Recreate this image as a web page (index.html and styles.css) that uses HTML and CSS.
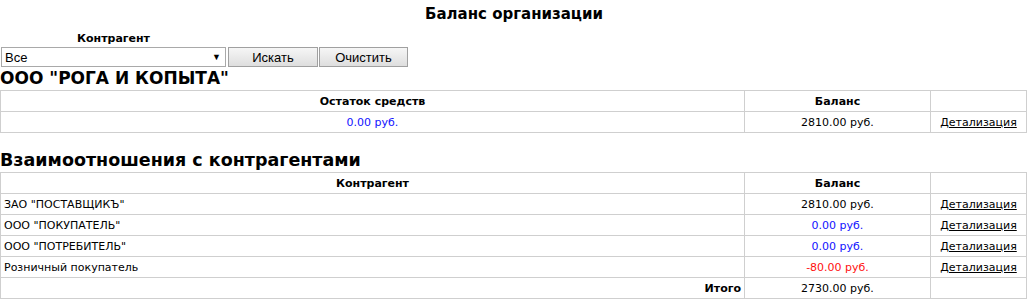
FILE: index.html
```html
<!DOCTYPE html>
<html lang="ru">
<head>
<meta charset="utf-8">
<title>Баланс организации</title>
<link rel="stylesheet" href="styles.css">
</head>
<body>
<h1 class="page-title">Баланс организации</h1>
<form class="filter">
  <div class="filter-field">
    <label class="filter-label" for="ka">Контрагент</label>
    <div class="select">
      <span class="select-value">Все</span>
      <span class="select-arrow">▼</span>
    </div>
  </div>
  <button type="button" class="btn btn-search">Искать</button>
  <button type="button" class="btn btn-clear">Очистить</button>
</form>

<h2 class="section-title first">ООО "РОГА И КОПЫТА"</h2>
<table class="grid">
  <colgroup><col class="c1"><col class="c2"><col class="c3"></colgroup>
  <tr><th>Остаток средств</th><th>Баланс</th><th></th></tr>
  <tr><td class="center pos">0.00 руб.</td><td class="center">2810.00 руб.</td><td class="center"><a href="#">Детализация</a></td></tr>
</table>

<h2 class="section-title second">Взаимоотношения с контрагентами</h2>
<table class="grid">
  <colgroup><col class="c1"><col class="c2"><col class="c3"></colgroup>
  <tr><th>Контрагент</th><th>Баланс</th><th></th></tr>
  <tr><td>ЗАО "ПОСТАВЩИКЪ"</td><td class="center">2810.00 руб.</td><td class="center"><a href="#">Детализация</a></td></tr>
  <tr><td>ООО "ПОКУПАТЕЛЬ"</td><td class="center pos">0.00 руб.</td><td class="center"><a href="#">Детализация</a></td></tr>
  <tr><td>ООО "ПОТРЕБИТЕЛЬ"</td><td class="center pos">0.00 руб.</td><td class="center"><a href="#">Детализация</a></td></tr>
  <tr><td>Розничный покупатель</td><td class="center neg">-80.00 руб.</td><td class="center"><a href="#">Детализация</a></td></tr>
  <tr><td class="total">Итого</td><td class="center">2730.00 руб.</td><td></td></tr>
</table>
</body>
</html>
```
FILE: styles.css
```css
html, body {
  margin: 0;
  padding: 0;
  background: #fff;
  color: #000;
  font-family: "DejaVu Sans", Verdana, sans-serif;
  font-size: 11px;
}
.page-title {
  margin: 0;
  padding-top: 5px;
  height: 25px;
  text-align: center;
  font-size: 15px;
  font-weight: bold;
}
.filter {
  display: flex;
  align-items: flex-end;
  padding-left: 1px;
  height: 37px;
}
.filter-field {
  display: flex;
  flex-direction: column;
  margin-right: 2px;
}
.filter-label {
  text-align: center;
  font-weight: bold;
  line-height: 17px;
}
.select {
  box-sizing: border-box;
  width: 225px;
  height: 20px;
  border: 1px solid #a9a9a9;
  display: flex;
  align-items: center;
  justify-content: space-between;
  padding: 0 4px 0 3px;
  font-family: "Liberation Sans", Arial, sans-serif;
  font-size: 13px;
}
.select-arrow { font-size: 9px; }
.btn {
  box-sizing: border-box;
  height: 20px;
  margin: 0;
  border: 1px solid #a0a0a0;
  border-radius: 0;
  background: linear-gradient(#f6f6f6, #dedede);
  font-family: "Liberation Sans", Arial, sans-serif;
  font-size: 13px;
  color: #000;
  padding: 0;
}
.btn-search { width: 90px; margin-right: 1px; }
.btn-clear { width: 89px; }
.section-title {
  margin: 0;
  font-weight: bold;
  line-height: 22px;
  height: 23px;
}
.section-title.first {
  font-size: 17px;
}
.section-title.second {
  font-size: 17.5px;
  margin-top: 16px;
}
.grid {
  border-collapse: collapse;
  width: 1027px;
  table-layout: fixed;
}
.c1 { width: 744px; }
.c2 { width: 186px; }
.grid th, .grid td {
  border: 1px solid #cfcfcf;
  height: 20px;
  padding: 0 3px;
  font-size: 11px;
  white-space: nowrap;
}
.grid th { font-weight: bold; text-align: center; }
.center { text-align: center; }
.pos { color: #1212ff; }
.neg { color: #ff1010; }
.total { text-align: right; font-weight: bold; }
.grid a { color: #000; }
```
